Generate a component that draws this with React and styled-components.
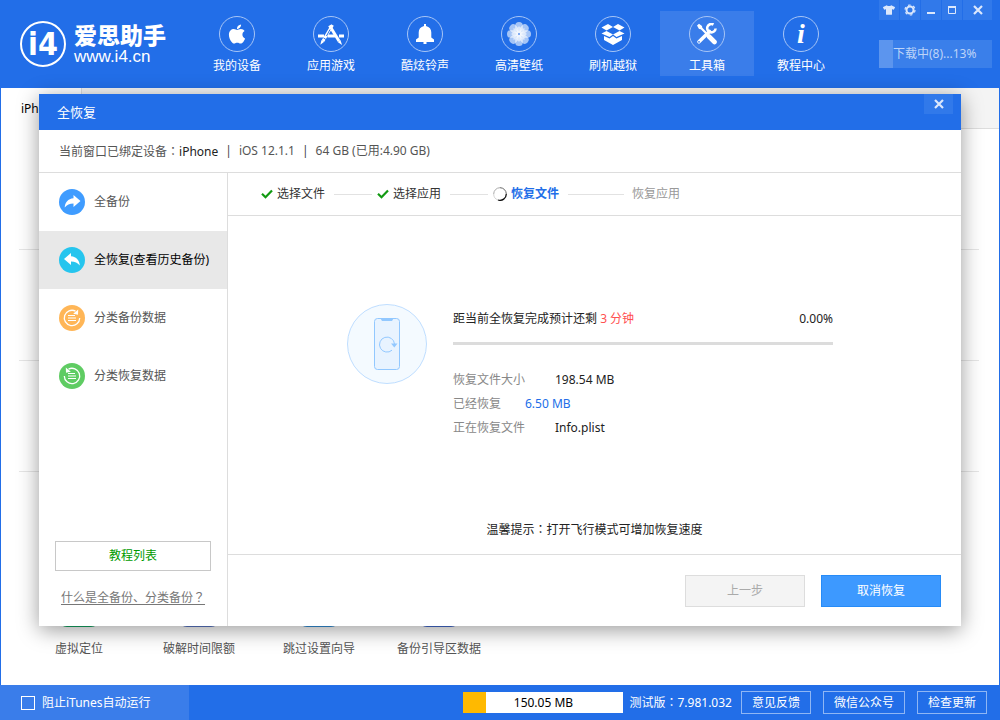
import React from 'react'
import styled, { createGlobalStyle } from 'styled-components'
import { FaApple, FaTshirt } from 'react-icons/fa'

const navItems = [
  { label: '我的设备', icon: 'apple' },
  { label: '应用游戏', icon: 'apps' },
  { label: '酷炫铃声', icon: 'bell' },
  { label: '高清壁纸', icon: 'flower' },
  { label: '刷机越狱', icon: 'box' },
  { label: '工具箱', icon: 'tools', active: true },
  { label: '教程中心', icon: 'info' },
]

const sideItems = [
  { label: '全备份', icon: 'forward', color: '#3f9cff' },
  { label: '全恢复(查看历史备份)', icon: 'back', color: '#26c5ee', active: true },
  { label: '分类备份数据', icon: 'listBackup', color: '#ffb657' },
  { label: '分类恢复数据', icon: 'listRestore', color: '#5fcc63' },
]

const tools = [
  { label: '虚拟定位', color: '#16a765' },
  { label: '破解时间限额', color: '#5b78c7' },
  { label: '跳过设置向导', color: '#3592dc' },
  { label: '备份引导区数据', color: '#456bd0' },
]

const NavIcon = ({ name }) => {
  switch (name) {
    case 'apple':
      return <FaApple size={22} />
    case 'bell':
      return (
        <svg width="20" height="22" viewBox="0 0 20 22" fill="currentColor">
          <path d="M9 1h2v2c3.500.8 5.300 3.200 5.300 6.500v5L19 16.500V19h-7.500v2h-3v-2H1v-2.500l2.700-2v-5C3.700 6.200 5.500 3.800 9 3z" />
        </svg>
      )
    case 'apps':
      return (
        <svg width="28" height="24" viewBox="0 0 28 24" fill="none" stroke="currentColor">
          <path d="M12.500 3.500L22 19" strokeWidth="3" />
          <path d="M15.500 3L6 19" strokeWidth="3" />
          <path d="M1 14h6M10.500 14h8M22 14h5" strokeWidth="3" />
          <path d="M4.500 18l2.800 1.800-4 3zM20.600 20l2.800-2 1.700 5z" fill="currentColor" stroke="none" />
          <path d="M13 7.500L9.500 14M6.500 16l2.500 1.500" stroke="#226ee8" strokeWidth="1" />
        </svg>
      )
    case 'flower':
      return (
        <svg width="26" height="26" viewBox="-13 -13 26 26" fill="currentColor">
          {[0, 45, 90, 135, 180, 225, 270, 315].map((a) => (
            <path key={a} d="M0 0L-3.800-5.500V-8.500a3.800 3.500 0 0 1 7.600 0v3z" opacity="0.6" transform={`rotate(${a})`} />
          ))}
          {[0, 45, 90, 135].map((a) => (
            <path key={a} d="M-1.500-6L0-8l1.500 2v12L0 8l-1.500-2z" opacity="0.6" transform={`rotate(${a})`} />
          ))}
          <circle r="1.200" fill="#7fabf2" />
        </svg>
      )
    case 'box':
      return (
        <svg width="24" height="22" viewBox="0 0 24 22" fill="currentColor">
          <path d="M7 1l5 3-6.500 3.500L.5 4.500zM17 1l-5 3 6.500 3.500 5-3zM5.500 8L12 11.500 8.500 14 .5 10.500zM18.500 8L12 11.500l3.500 2.500 8-3.500z" />
          <path d="M3 13l5.500 2.500L12 13l3.500 2.500L21 13v4l-9 5-9-5z" />
        </svg>
      )
    case 'tools':
      return (
        <svg width="22" height="22" viewBox="0 0 22 22" fill="none" stroke="currentColor">
          <path d="M1 2.500L3 .8l3 2.200.3 1.800L12 10.500l-1.500 1.500L4.800 6.300 3 6z" fill="currentColor" stroke="none" />
          <path d="M13 13.500l5.500 5.500" strokeWidth="4.600" strokeLinecap="round" />
          <path d="M13.500 8.500L3 18.800" strokeWidth="3.600" strokeLinecap="round" />
          <path d="M17.500 1.500a4.200 4.200 0 1 0 2.100 4" strokeWidth="2.600" />
          <circle cx="3" cy="18.800" r=".9" fill="#3a7dea" stroke="none" />
        </svg>
      )
    default:
      return <InfoLetter>i</InfoLetter>
  }
}

const SideGlyph = ({ name }) => {
  if (name === 'forward' || name === 'back') {
    return (
      <svg width="26" height="26" viewBox="0 0 26 26" fill="#fff">
        <path
          d="M14.500 6L21.500 12l-7 6v-3.500c-4 0-6.500 1.200-8.800 4 .3-5 3.300-8.800 8.800-9.200z"
          transform={name === 'back' ? 'matrix(-1 0 0 1 26.500 0)' : undefined}
        />
      </svg>
    )
  }
  return (
    <svg width="26" height="26" viewBox="0 0 26 26" fill="none" stroke="#fff">
      <g transform={name === 'listRestore' ? 'matrix(-1 0 0 1 26 0)' : undefined}>
        <path d="M16.500 6.100A7.700 7.700 0 1 0 20.700 13" strokeWidth="1.300" />
        <path d="M14.200 8.800l5-4.300-.2 5.300z" fill="#fff" stroke="none" />
      </g>
      <path d="M9 10.500h7M9 13h8M9 15.500h8" strokeWidth="1.100" />
    </svg>
  )
}

const CheckIcon = () => (
  <svg width="12" height="10" viewBox="0 0 12 10" fill="none" stroke="#129a12" strokeWidth="2.200">
    <path d="M1 4.800l3.500 3.400L11 1.500" />
  </svg>
)

const CloseIcon = () => (
  <svg width="10" height="10" viewBox="0 0 10 10" stroke="currentColor" strokeWidth="2.200">
    <path d="M1 1l8 8M9 1L1 9" />
  </svg>
)

const Spinner = () => (
  <svg width="14" height="14" viewBox="0 0 14 14" fill="none" strokeWidth="1">
    <path d="M7 .7A6.300 6.300 0 0 0 .7 7" stroke="#aaa" />
    <path d="M.7 7A6.300 6.300 0 0 0 5 13" stroke="#d4d4d4" />
    <path d="M7 .7A6.300 6.300 0 0 1 13.300 7" stroke="#666" />
    <path d="M13.300 7A6.300 6.300 0 0 1 5 13" stroke="#111" strokeWidth="1.300" />
  </svg>
)

const PhoneArt = () => (
  <svg width="80" height="80" viewBox="0 0 80 80" fill="none" stroke="#92c8ff">
    <circle cx="40" cy="40" r="39.500" fill="#f4faff" stroke="#bfdeff" />
    <rect x="27.500" y="14.500" width="25" height="51" rx="3" fill="#e8f3ff" />
    <path d="M33.500 14.500h13l-1.500 2.500h-10z" fill="#92c8ff" stroke="none" />
    <path d="M45 46.200A7.500 7.500 0 1 1 47.500 40" />
    <path d="M44 39.500h6.500L47.300 43.500z" fill="#92c8ff" stroke="none" />
  </svg>
)

const App = () => {
  return (
    <Window>
      <GlobalStyle />
      <Header>
        <Brand>
          <BrandMark>i4</BrandMark>
          <BrandText>
            <BrandName>爱思助手</BrandName>
            <BrandSite>www.i4.cn</BrandSite>
          </BrandText>
        </Brand>
        <Nav>
          {navItems.map((item) => (
            <NavButton key={item.label} $active={item.active}>
              <NavCircle><NavIcon name={item.icon} /></NavCircle>
              <span>{item.label}</span>
            </NavButton>
          ))}
        </Nav>
        <HeaderSide>
          <WindowButtons>
            <WindowButton aria-label="皮肤"><FaTshirt size={12} /></WindowButton>
            <WindowButton aria-label="设置">
              <svg width="12" height="12" viewBox="0 0 12 12" fill="none" stroke="currentColor">
                <circle cx="6" cy="6" r="3.500" strokeWidth="2" />
                <circle cx="6" cy="6" r="5" strokeWidth="1.200" strokeDasharray="2.600 2.636" />
              </svg>
            </WindowButton>
            <WindowButton aria-label="最小化">
              <svg width="8" height="8" viewBox="0 0 8 8"><path d="M0 6h8v2H0z" fill="currentColor" /></svg>
            </WindowButton>
            <WindowButton aria-label="最大化">
              <svg width="8" height="8" viewBox="0 0 8 8" fill="none" stroke="currentColor">
                <path d="M.5 1v6.500h7V1" /><path d="M0 1h8" strokeWidth="2" />
              </svg>
            </WindowButton>
            <WindowButton $wide aria-label="关闭"><CloseIcon /></WindowButton>
          </WindowButtons>
          <Download>下载中(8)...13%</Download>
        </HeaderSide>
      </Header>

      <Page>
        <TabBar><Tab>iPhone</Tab></TabBar>
        <ToolArea>
          <ToolRow $first />
          <ToolRow />
          <ToolRow />
          <ToolList>
            {tools.map((tool) => (
              <Tool key={tool.label}>
                <ToolIcon $color={tool.color} />
                {tool.label}
              </Tool>
            ))}
          </ToolList>
        </ToolArea>
      </Page>

      <StatusBar>
        <BlockItunes>
          <input type="checkbox" />
          阻止iTunes自动运行
        </BlockItunes>
        <StatusRight>
          <Storage>150.05 MB</Storage>
          <Version>测试版<Punct>：</Punct>7.981.032</Version>
          <StatusButton>意见反馈</StatusButton>
          <StatusButton>微信公众号</StatusButton>
          <StatusButton>检查更新</StatusButton>
        </StatusRight>
      </StatusBar>

      <Dialog role="dialog" aria-labelledby="dialog-title">
        <DialogTitle>
          <h2 id="dialog-title">全恢复</h2>
          <WindowButton $wide aria-label="关闭"><CloseIcon /></WindowButton>
        </DialogTitle>
        <DeviceBar>
          <span>当前窗口已绑定设备<Punct>：</Punct><b>iPhone</b></span>
          <i>|</i>
          <span>iOS 12.1.1</span>
          <i>|</i>
          <span>64 GB (已用:4.90 GB)</span>
        </DeviceBar>
        <DialogBody>
          <Sidebar>
            {sideItems.map((item) => (
              <SideButton key={item.label} $active={item.active}>
                <SideIcon $color={item.color}><SideGlyph name={item.icon} /></SideIcon>
                {item.label}
              </SideButton>
            ))}
            <SideFooter>
              <TutorialButton>教程列表</TutorialButton>
              <HelpLink href="#help">什么是全备份、分类备份<Punct>？</Punct></HelpLink>
            </SideFooter>
          </Sidebar>
          <Main>
            <Steps>
              <Step><CheckIcon />选择文件</Step>
              <StepLine />
              <Step><CheckIcon />选择应用</Step>
              <StepLine />
              <Step $current><Spinner />恢复文件</Step>
              <StepLine $long />
              <Step $pending>恢复应用</Step>
            </Steps>
            <Content>
              <Restore>
                <PhoneArt />
                <Progress>
                  <ProgressHead>
                    <label htmlFor="restore">距当前全恢复完成预计还剩 <em>3 分钟</em></label>
                    <span>0.00%</span>
                  </ProgressHead>
                  <Bar id="restore" value="0" max="100" />
                  <Details>
                    <dt>恢复文件大小</dt><dd>198.54 MB</dd>
                  </Details>
                  <Details $short>
                    <dt>已经恢复</dt><dd>6.50 MB</dd>
                  </Details>
                  <Details>
                    <dt>正在恢复文件</dt><dd>Info.plist</dd>
                  </Details>
                </Progress>
              </Restore>
              <Tip>温馨提示<Punct>：</Punct>打开飞行模式可增加恢复速度</Tip>
            </Content>
            <Actions>
              <ActionButton disabled>上一步</ActionButton>
              <ActionButton>取消恢复</ActionButton>
            </Actions>
          </Main>
        </DialogBody>
      </Dialog>
    </Window>
  )
}

const GlobalStyle = createGlobalStyle`
* {
    box-sizing: border-box;
}
body {
    margin: 0;
}
body, button, input {
    font-family: "Noto Sans", "Noto Sans CJK SC", sans-serif;
    font-size: 12px;
    line-height: 16px;
}
button {
    padding: 0;
    border: none;
    border-radius: 0;
    cursor: pointer;
}
`

const Window = styled.div`
position: relative;
display: flex;
flex-direction: column;
min-height: 100vh;
background: #226ee8;
`
const Header = styled.header`
display: flex;
height: 88px;
color: #fff;
`
const Brand = styled.div`
display: flex;
align-items: center;
gap: 8px;
width: 190px;
padding-left: 20px;
`
const BrandMark = styled.div`
display: flex;
align-items: center;
justify-content: center;
width: 46px;
height: 46px;
border: 2px solid #fff;
border-radius: 50%;
font: bold 32px/32px "DejaVu Sans Condensed", "DejaVu Sans", sans-serif;
`
const BrandText = styled.div`
display: flex;
flex-direction: column;
gap: 2px;
`
const BrandName = styled.div`
font-family: "Noto Sans CJK SC", sans-serif;
font-size: 23px;
font-weight: 900;
line-height: 24px;
`
const BrandSite = styled.div`
font-family: "Liberation Sans", sans-serif;
font-size: 17px;
line-height: 18px;
`
const Nav = styled.nav`
display: flex;
padding-top: 11px;
`
const NavButton = styled.button`
display: flex;
flex-direction: column;
align-items: center;
gap: 6px;
width: 94px;
height: 65px;
padding-top: 5px;
color: #fff;
background: ${(props) => (props.$active ? '#3a7dea' : 'transparent')};
`
const NavCircle = styled.span`
display: flex;
align-items: center;
justify-content: center;
width: 36px;
height: 36px;
border: 1px solid #a7c5f6;
border-radius: 50%;
`
const InfoLetter = styled.span`
font: italic bold 28px/28px "Liberation Serif", serif;
`
const HeaderSide = styled.div`
display: flex;
flex-direction: column;
align-items: flex-end;
gap: 20px;
margin-left: auto;
padding-right: 8px;
`
const WindowButtons = styled.div`
display: flex;
gap: 1px;
`
const WindowButton = styled.button`
display: flex;
align-items: center;
justify-content: center;
width: ${(props) => (props.$wide ? '29px' : '20px')};
height: 20px;
color: #dce8fc;
background: #3179ea;
`
const Download = styled.button`
width: 113px;
height: 28px;
padding-left: 14px;
color: #bdd4f8;
text-align: left;
white-space: nowrap;
background: linear-gradient(to right, #5c95ee 14px, #3a7fea 14px);
`
const Page = styled.div`
display: flex;
flex: 1;
flex-direction: column;
margin: 0 1px;
background: #fff;
`
const TabBar = styled.div`
display: flex;
height: 41px;
background: #f4f4f4;
border-bottom: 1px solid #ddd;
`
const Tab = styled.button`
width: 81px;
margin-bottom: -1px;
padding: 0 0 0 20px;
text-align: left;
background: #fff;
border-right: 1px solid #ddd;
`
const ToolArea = styled.div`
padding: 0 20px 0 18px;
`
const ToolRow = styled.div`
height: ${(props) => (props.$first ? '121px' : '111px')};
border-bottom: 1px solid #e6e6e6;
`
const ToolList = styled.div`
display: flex;
padding-top: 115px;
`
const Tool = styled.button`
display: flex;
flex-direction: column;
align-items: center;
gap: 14px;
width: 120px;
color: #555;
background: transparent;
`
const ToolIcon = styled.span`
width: 40px;
height: 40px;
border-radius: 8px;
background: ${(props) => props.$color};
`
const StatusBar = styled.footer`
display: flex;
align-items: stretch;
justify-content: space-between;
height: 35px;
color: #fff;
`
const BlockItunes = styled.label`
display: flex;
align-items: center;
gap: 7px;
width: 189px;
padding-left: 21px;
background: #3a7dea;

input {
    appearance: none;
    width: 14px;
    height: 14px;
    margin: 0;
    border: 1px solid #fff;
}
`
const StatusRight = styled.div`
display: flex;
align-items: center;
gap: 12px;
padding-right: 13px;
`
const Storage = styled.div`
width: 160px;
height: 21px;
color: #000;
line-height: 21px;
text-align: center;
background: linear-gradient(to right, #ffb900 23px, #fff 23px);
`
const Version = styled.span`
margin: 0 -3px 0 -6px;
white-space: nowrap;
`
const StatusButton = styled.button`
height: 23px;
padding: 0 10px;
color: #fff;
background: transparent;
border: 1px solid #8fb6f4;
`
const Punct = styled.span`
font-family: "Noto Sans CJK TC", sans-serif;
`

const Dialog = styled.section`
position: absolute;
top: 94px;
right: 39px;
bottom: 94px;
left: 39px;
display: flex;
flex-direction: column;
background: #fff;
box-shadow: 0 4px 20px rgba(0, 0, 0, 0.4);
`
const DialogTitle = styled.div`
display: flex;
justify-content: space-between;
height: 36px;
padding: 0 8px 0 18px;
color: #fff;
background: #226ee8;

h2 {
    margin: 0;
    font-size: 13px;
    font-weight: 400;
    line-height: 36px;
}
`
const DeviceBar = styled.div`
display: flex;
align-items: center;
gap: 7px;
height: 43px;
padding-left: 20px;
color: #555;
border-bottom: 1px solid #ddd;

b {
    color: #222;
    font-weight: 400;
}
i {
    color: #444;
    font-style: normal;
}
`
const DialogBody = styled.div`
display: flex;
flex: 1;
min-height: 0;
`
const Sidebar = styled.aside`
display: flex;
flex-direction: column;
width: 189px;
border-right: 1px solid #ddd;
`
const SideButton = styled.button`
display: flex;
align-items: center;
gap: 9px;
height: 58px;
padding-left: 20px;
color: ${(props) => (props.$active ? '#000' : '#555')};
white-space: nowrap;
background: ${(props) => (props.$active ? '#e8e8e8' : 'transparent')};
`
const SideIcon = styled.span`
display: flex;
width: 26px;
height: 26px;
border-radius: 50%;
background: ${(props) => props.$color};
`
const SideFooter = styled.div`
display: flex;
flex-direction: column;
align-items: center;
gap: 18px;
margin-top: auto;
padding: 0 16px 20px;
`
const TutorialButton = styled.button`
width: 100%;
height: 30px;
color: #009a00;
background: #fff;
border: 1px solid #c8c8c8;
`
const HelpLink = styled.a`
color: #777;
text-underline-offset: 2px;
white-space: nowrap;
`
const Main = styled.main`
display: flex;
flex: 1;
flex-direction: column;
`
const Steps = styled.div`
display: flex;
align-items: center;
height: 43px;
padding-left: 33px;
border-bottom: 1px solid #ddd;
`
const Step = styled.span`
display: flex;
align-items: center;
gap: 4px;
color: ${(props) => (props.$current ? '#226ee8' : props.$pending ? '#999' : '#333')};
font-weight: ${(props) => (props.$current ? 700 : 400)};
`
const StepLine = styled.span`
width: ${(props) => (props.$long ? '56px' : '38px')};
height: 1px;
margin: 0 ${(props) => (props.$long ? '8px' : '5px')} 0 9px;
background: #e2e2e2;
`
const Content = styled.div`
display: flex;
flex: 1;
flex-direction: column;
justify-content: space-between;
padding: 88px 0 16px;
`
const Restore = styled.div`
display: flex;
gap: 26px;
padding: 0 128px 0 119px;
`
const Progress = styled.div`
flex: 1;
padding-top: 7px;
`
const ProgressHead = styled.div`
display: flex;
justify-content: space-between;
color: #222;

em {
    color: #ff5050;
    font-style: normal;
}
`
const Bar = styled.progress`
appearance: none;
display: block;
width: 100%;
height: 3px;
margin: 15px 0 23px;
border: none;

&::-webkit-progress-bar {
    background: #dcdcdc;
}
&::-webkit-progress-value {
    background: #226ee8;
}
`
const Details = styled.dl`
display: flex;
margin: 0;
line-height: 24px;

dt {
    width: ${(props) => (props.$short ? '72px' : '102px')};
    color: #888;
}
dd {
    margin: 0;
    color: ${(props) => (props.$short ? '#226ee8' : '#222')};
}
`
const Tip = styled.p`
margin: 0;
color: #222;
text-align: center;
`
const Actions = styled.div`
display: flex;
justify-content: flex-end;
gap: 16px;
padding: 20px 20px 19px;
border-top: 1px solid #ddd;
`
const ActionButton = styled.button`
width: 120px;
height: 32px;
color: #fff;
background: #3d99ff;
border: 1px solid #268bf7;

&:disabled {
    color: #aaa;
    background: #f4f4f4;
    border-color: #ddd;
}
`

export default App
